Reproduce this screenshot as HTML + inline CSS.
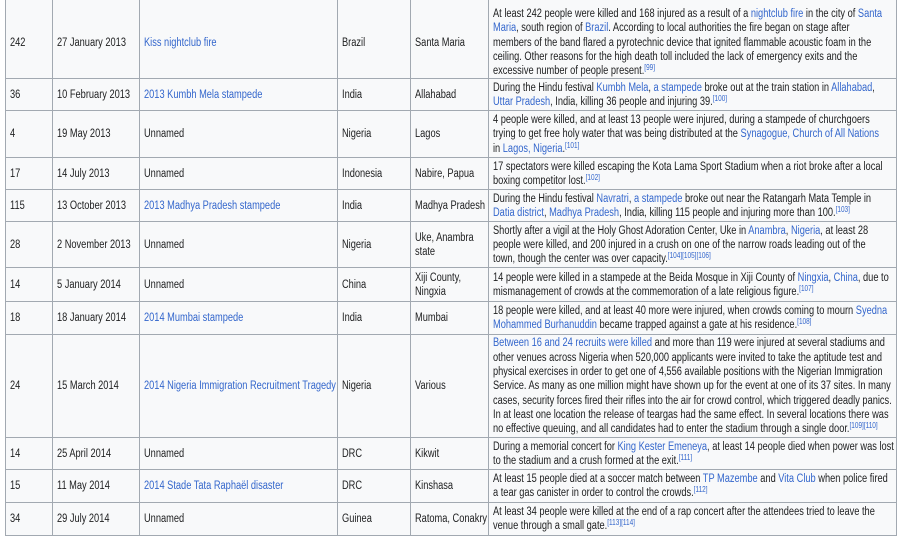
<!DOCTYPE html>
<html><head><meta charset="utf-8"><style>
html,body{margin:0;padding:0;background:#fff;width:900px;height:536px;overflow:hidden}
table{position:absolute;left:5px;top:-2px;width:891px;border-collapse:collapse;table-layout:fixed;background:#f8f9fa;font-family:"Liberation Sans","Noto Sans CJK KR",sans-serif;font-size:11.5px;color:#202122;line-height:14.3px}
td{border:1px solid #a2a9b1;padding:0 4px;vertical-align:middle;white-space:nowrap;overflow:hidden}
tr.r1 td{padding-top:8px}
td>div{display:inline-block;transform:scaleX(.805);transform-origin:0 50%}
a{color:#3366cc;text-decoration:none}
sup{font-size:8px;line-height:0;vertical-align:4px}
</style></head><body>
<table>
<colgroup><col style="width:47px"><col style="width:87px"><col style="width:198px"><col style="width:73px"><col style="width:78px"><col style="width:408px"></colgroup>
<tr class="r1" style="height:80px"><td><div>242</div></td><td><div>27 January 2013</div></td><td><div><a>Kiss nightclub fire</a></div></td><td><div>Brazil</div></td><td><div>Santa Maria</div></td><td><div>At least 242 people were killed and 168 injured as a result of a <a>nightclub fire</a> in the city of <a>Santa</a><br><a>Maria</a>, south region of <a>Brazil</a>. According to local authorities the fire began on stage after<br>members of the band flared a pyrotechnic device that ignited flammable acoustic foam in the<br>ceiling. Other reasons for the high death toll included the lack of emergency exits and the<br>excessive number of people present.<sup><a>[99]</a></sup></div></td></tr>
<tr style="height:32px"><td><div>36</div></td><td><div>10 February 2013</div></td><td><div><a>2013 Kumbh Mela stampede</a></div></td><td><div>India</div></td><td><div>Allahabad</div></td><td><div>During the Hindu festival <a>Kumbh Mela</a>, <a>a stampede</a> broke out at the train station in <a>Allahabad</a>,<br><a>Uttar Pradesh</a>, India, killing 36 people and injuring 39.<sup><a>[100]</a></sup></div></td></tr>
<tr style="height:47px"><td><div>4</div></td><td><div>19 May 2013</div></td><td><div>Unnamed</div></td><td><div>Nigeria</div></td><td><div>Lagos</div></td><td><div>4 people were killed, and at least 13 people were injured, during a stampede of churchgoers<br>trying to get free holy water that was being distributed at the <a>Synagogue, Church of All Nations</a><br>in <a>Lagos, Nigeria</a>.<sup><a>[101]</a></sup></div></td></tr>
<tr style="height:32px"><td><div>17</div></td><td><div>14 July 2013</div></td><td><div>Unnamed</div></td><td><div>Indonesia</div></td><td><div>Nabire, Papua</div></td><td><div>17 spectators were killed escaping the Kota Lama Sport Stadium when a riot broke after a local<br>boxing competitor lost.<sup><a>[102]</a></sup></div></td></tr>
<tr style="height:32px"><td><div>115</div></td><td><div>13 October 2013</div></td><td><div><a>2013 Madhya Pradesh stampede</a></div></td><td><div>India</div></td><td><div>Madhya Pradesh</div></td><td><div>During the Hindu festival <a>Navratri</a>, <a>a stampede</a> broke out near the Ratangarh Mata Temple in<br><a>Datia district</a>, <a>Madhya Pradesh</a>, India, killing 115 people and injuring more than 100.<sup><a>[103]</a></sup></div></td></tr>
<tr style="height:46px"><td><div>28</div></td><td><div>2 November 2013</div></td><td><div>Unnamed</div></td><td><div>Nigeria</div></td><td><div>Uke, Anambra<br>state</div></td><td><div>Shortly after a vigil at the Holy Ghost Adoration Center, Uke in <a>Anambra</a>, <a>Nigeria</a>, at least 28<br>people were killed, and 200 injured in a crush on one of the narrow roads leading out of the<br>town, though the center was over capacity.<sup><a>[104][105][106]</a></sup></div></td></tr>
<tr style="height:34px"><td><div>14</div></td><td><div>5 January 2014</div></td><td><div>Unnamed</div></td><td><div>China</div></td><td><div>Xiji County,<br>Ningxia</div></td><td><div>14 people were killed in a stampede at the Beida Mosque in Xiji County of <a>Ningxia</a>, <a>China</a>, due to<br>mismanagement of crowds at the commemoration of a late religious figure.<sup><a>[107]</a></sup></div></td></tr>
<tr style="height:33px"><td><div>18</div></td><td><div>18 January 2014</div></td><td><div><a>2014 Mumbai stampede</a></div></td><td><div>India</div></td><td><div>Mumbai</div></td><td><div>18 people were killed, and at least 40 more were injured, when crowds coming to mourn <a>Syedna</a><br><a>Mohammed Burhanuddin</a> became trapped against a gate at his residence.<sup><a>[108]</a></sup></div></td></tr>
<tr style="height:103px"><td><div>24</div></td><td><div>15 March 2014</div></td><td><div><a>2014 Nigeria Immigration Recruitment Tragedy</a></div></td><td><div>Nigeria</div></td><td><div>Various</div></td><td><div><a>Between 16 and 24 recruits were killed</a> and more than 119 were injured at several stadiums and<br>other venues across Nigeria when 520,000 applicants were invited to take the aptitude test and<br>physical exercises in order to get one of 4,556 available positions with the Nigerian Immigration<br>Service. As many as one million might have shown up for the event at one of its 37 sites. In many<br>cases, security forces fired their rifles into the air for crowd control, which triggered deadly panics.<br>In at least one location the release of teargas had the same effect. In several locations there was<br>no effective queuing, and all candidates had to enter the stadium through a single door.<sup><a>[109][110]</a></sup></div></td></tr>
<tr style="height:32px"><td><div>14</div></td><td><div>25 April 2014</div></td><td><div>Unnamed</div></td><td><div>DRC</div></td><td><div>Kikwit</div></td><td><div>During a memorial concert for <a>King Kester Emeneya</a>, at least 14 people died when power was lost<br>to the stadium and a crush formed at the exit.<sup><a>[111]</a></sup></div></td></tr>
<tr style="height:33px"><td><div>15</div></td><td><div>11 May 2014</div></td><td><div><a>2014 Stade Tata Raphaël disaster</a></div></td><td><div>DRC</div></td><td><div>Kinshasa</div></td><td><div>At least 15 people died at a soccer match between <a>TP Mazembe</a> and <a>Vita Club</a> when police fired<br>a tear gas canister in order to control the crowds.<sup><a>[112]</a></sup></div></td></tr>
<tr style="height:33px"><td><div>34</div></td><td><div>29 July 2014</div></td><td><div>Unnamed</div></td><td><div>Guinea</div></td><td><div>Ratoma, Conakry</div></td><td><div>At least 34 people were killed at the end of a rap concert after the attendees tried to leave the<br>venue through a small gate.<sup><a>[113][114]</a></sup></div></td></tr>
</table>
</body></html>
